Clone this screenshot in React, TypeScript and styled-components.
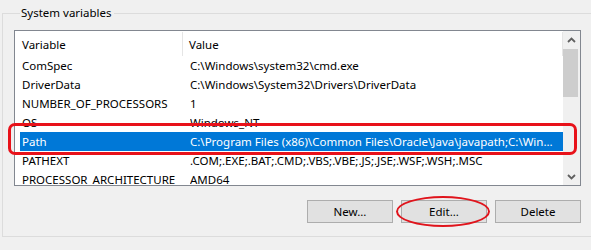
import React from "react";
import styled, { createGlobalStyle } from "styled-components";

const Global = createGlobalStyle`
  html, body { margin: 0; padding: 0; background: #f0f0f0; overflow: hidden; }
  body { font-family: "Noto Sans", "Segoe UI", sans-serif; font-size: 11.5px; color: #000; }
`;

const Page = styled.div`
  position: relative;
  width: 591px;
  height: 250px;
  padding-top: 5px;
  box-sizing: border-box;
  overflow: hidden;
`;

const Group = styled.fieldset`
  margin: 0 0 0 2px;
  padding: 9px 0 13px 11px;
  width: 589px;
  box-sizing: border-box;
  border: 1px solid #dcdcdc;
  border-right: none;
  min-width: 0;
`;

const Legend = styled.legend`
  margin-left: 6px;
  padding: 0 2px 0 1px;
  line-height: 16px;
  font-size: 11.5px;
  color: #000;
`;

const Column = styled.div`
  width: 567px;
  display: flex;
  flex-direction: column;
  gap: 14px;
`;

const ListBox = styled.div`
  height: 156px;
  border: 1px solid #828790;
  background: #fff;
  box-sizing: border-box;
  display: flex;
  overflow: hidden;
`;

const Table = styled.div`
  flex: 1;
  display: flex;
  flex-direction: column;
  min-width: 0;
`;

const Header = styled.div`
  height: 25px;
  display: flex;
  align-items: stretch;
  flex-shrink: 0;
`;

const HeaderCell = styled.div<{ $w?: number }>`
  ${(p) => (p.$w ? `width: ${p.$w}px;` : "flex: 1;")}
  display: flex;
  align-items: center;
  padding-left: ${(p) => (p.$w ? 7 : 6)}px;
  box-sizing: border-box;
  border-right: 1px solid #e5e5e5;
  margin: 1px 0 0;
  white-space: nowrap;
`;

const Row = styled.div<{ $sel?: boolean }>`
  height: 19px;
  margin-left: 5px;
  display: flex;
  align-items: center;
  flex-shrink: 0;
  background: ${(p) => (p.$sel ? "#0078d7" : "transparent")};
  color: ${(p) => (p.$sel ? "#fff" : "#000")};
  white-space: nowrap;
`;

const VarCell = styled.div`
  width: 170px;
  padding-left: 2px;
  box-sizing: border-box;
  overflow: hidden;
`;

const ValCell = styled.div`
  flex: 1;
  overflow: hidden;
`;

const ScrollBar = styled.div`
  width: 17px;
  background: #f0f0f0;
  display: flex;
  flex-direction: column;
  flex-shrink: 0;
`;

const ArrowBtn = styled.div`
  height: 17px;
  display: flex;
  align-items: center;
  justify-content: center;
  flex-shrink: 0;
`;

const Track = styled.div`
  flex: 1;
  display: flex;
  flex-direction: column;
`;

const Thumb = styled.div`
  height: 48px;
  margin: 1px 2px 0 0;
  background: #cdcdcd;
`;

const Buttons = styled.div`
  display: flex;
  justify-content: flex-end;
  gap: 8px;
`;

const Button = styled.button`
  width: 86px;
  height: 23px;
  background: #e1e1e1;
  border: 1px solid #adadad;
  font-family: "Noto Sans", "Segoe UI", sans-serif;
  font-size: 11.5px;
  color: #000;
  padding: 0;
  margin: 0;
`;

const RowMark = styled.div`
  position: absolute;
  left: 8px;
  top: 123px;
  width: 569px;
  height: 32px;
  box-sizing: border-box;
  border: 3px solid #e8121a;
  border-radius: 7px;
  pointer-events: none;
`;

const ButtonMark = styled.div`
  position: absolute;
  left: 396px;
  top: 196px;
  width: 94px;
  height: 31px;
  box-sizing: border-box;
  border: 2px solid #e0141c;
  border-radius: 50%;
  pointer-events: none;
`;

const Chevron = ({ up }: { up?: boolean }) => (
  <svg width="9" height="6" viewBox="0 0 9 6">
    <polyline
      points={up ? "1,5 4.5,1.5 8,5" : "1,1 4.5,4.5 8,1"}
      fill="none"
      stroke="#606060"
      strokeWidth="1.8"
    />
  </svg>
);

const rows: [string, string][] = [
  ["ComSpec", "C:\\Windows\\system32\\cmd.exe"],
  ["DriverData", "C:\\Windows\\System32\\Drivers\\DriverData"],
  ["NUMBER_OF_PROCESSORS", "1"],
  ["OS", "Windows_NT"],
  ["Path", "C:\\Program Files (x86)\\Common Files\\Oracle\\Java\\javapath;C:\\Win..."],
  ["PATHEXT", ".COM;.EXE;.BAT;.CMD;.VBS;.VBE;.JS;.JSE;.WSF;.WSH;.MSC"],
  ["PROCESSOR_ARCHITECTURE", "AMD64"],
];

export default function App() {
  return (
    <Page>
      <Global />
      <Group>
        <Legend>System variables</Legend>
        <Column>
          <ListBox>
            <Table>
              <Header>
                <HeaderCell $w={168}>Variable</HeaderCell>
                <HeaderCell>Value</HeaderCell>
              </Header>
              {rows.map(([k, v]) => (
                <Row key={k} $sel={k === "Path"}>
                  <VarCell>{k}</VarCell>
                  <ValCell>{v}</ValCell>
                </Row>
              ))}
            </Table>
            <ScrollBar>
              <ArrowBtn>
                <Chevron up />
              </ArrowBtn>
              <Track>
                <Thumb />
              </Track>
              <ArrowBtn>
                <Chevron />
              </ArrowBtn>
            </ScrollBar>
          </ListBox>
          <Buttons>
            <Button>New...</Button>
            <Button>Edit...</Button>
            <Button>Delete</Button>
          </Buttons>
        </Column>
      </Group>
      <RowMark />
      <ButtonMark />
    </Page>
  );
}
